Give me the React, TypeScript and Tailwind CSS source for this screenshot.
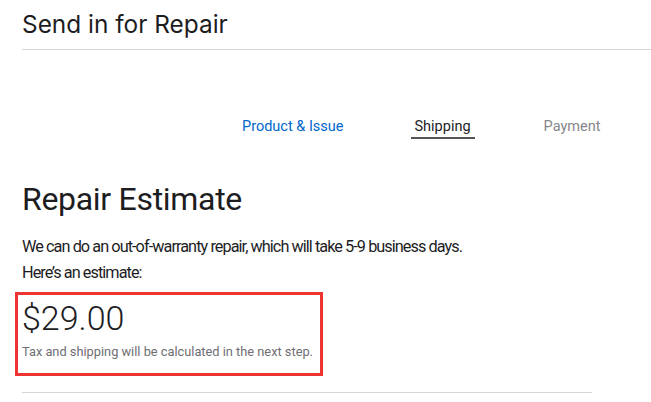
export default function App() {
  return (
    <div className="h-[402px] w-[651px] overflow-hidden bg-white font-['Roboto',sans-serif] text-[#1d1d1f]">
      <div className="pl-[22px]">
        <div className="border-b border-[#d6d6d6] pt-[6px] pb-[7px]">
          <h1 className="font-['Inter',sans-serif] text-[24.4px] leading-[36px] font-normal">Send in for Repair</h1>
        </div>

        <nav className="mt-[67px] flex items-start pl-[220px] text-[14.5px] leading-[20px]">
          <span className="text-[#0066cc]">Product &amp; Issue</span>
          <span className="ml-[67px] border-b-2 border-[#555] px-[4px] pb-[0px]">Shipping</span>
          <span className="ml-[69px] text-[#86868b]">Payment</span>
        </nav>

        <div className="w-[570px]">
          <h2 className="mt-[40px] text-[32px] leading-[40px] font-normal tracking-[-0.3px]">Repair Estimate</h2>
          <p className="mt-[15px] text-[16.3px] leading-[26px] tracking-[-0.95px]">
            We can do an out-of-warranty repair, which will take 5-9 business days.
            <br />
            Here’s an estimate:
          </p>

          <div className="-ml-[7px] mt-[6px] w-[308px] border-[3px] border-[#ee3333] px-[4px] pt-[5px] pb-[13px]">
            <div className="text-[34px] leading-[36px] font-light">$29.00</div>
            <div className="mt-[8px] text-[12.8px] leading-[16px] text-[#6e6e73]">
              Tax and shipping will be calculated in the next step.
            </div>
          </div>

          <div className="mt-[16px] border-b border-[#d6d6d6]" />
        </div>
      </div>
    </div>
  )
}
